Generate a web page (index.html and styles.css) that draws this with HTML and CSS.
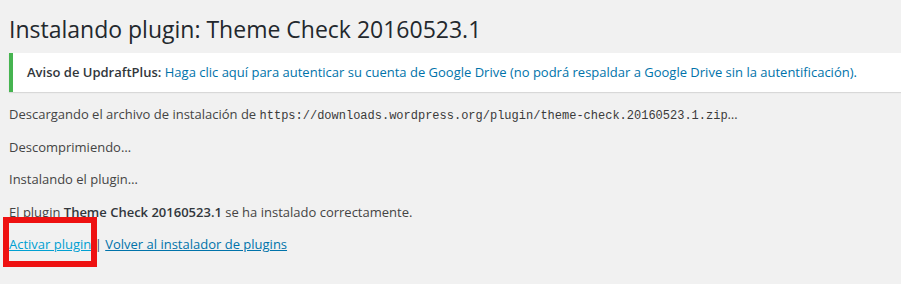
FILE: index.html
```html
<!DOCTYPE html>
<html lang="es">
<head>
    <meta charset="UTF-8">
    <title>Instalar plugin</title>
    <link rel="stylesheet" href="styles.css">
</head>
<body>
    <div class="wrap">
        <h1>Instalando plugin: Theme Check 20160523.1</h1>

        <div class="notice">
            <p><strong>Aviso de UpdraftPlus:</strong> <a href="#">Haga clic aquí para autenticar su cuenta de Google Drive (no podrá respaldar a Google Drive sin la autentificación).</a></p>
        </div>

        <p>Descargando el archivo de instalación de <code>https://downloads.wordpress.org/plugin/theme-check.20160523.1.zip</code>…</p>
        <p>Descomprimiendo…</p>
        <p>Instalando el plugin…</p>
        <p>El plugin <strong>Theme Check 20160523.1</strong> se ha instalado correctamente.</p>
        <p class="actions">
            <span class="marked"><a href="#" class="hover">Activar plugin</a></span> | <a href="#">Volver al instalador de plugins</a>
        </p>
    </div>
</body>
</html>
```

FILE: styles.css
```css
* {
    box-sizing: border-box;
}

body {
    margin: 0;
    background: #f1f1f1;
    color: #444;
    font-family: "Open Sans", sans-serif;
    font-size: 13px;
    line-height: 1.5;
}

.wrap {
    padding: 6px 0 0 9px;
}

h1 {
    margin: 0;
    padding: 9px 15px 4px 0;
    font-size: 23px;
    font-weight: 400;
    line-height: 29px;
    color: #23282d;
}

p {
    margin: 13px 0;
}

a {
    color: #0073aa;
}

.notice {
    margin: 5px 0 13px;
    padding: 1px 12px;
    background: #fff;
    border-left: 4px solid #46b450;
    box-shadow: 0 1px 1px 0 rgba(0, 0, 0, 0.1);
}

.notice p {
    margin: 6.5px 0;
    padding: 2px;
}

.notice a {
    text-decoration: none;
}

code {
    font-family: "Liberation Mono", monospace;
    font-size: 12px;
    color: #3a3a3a;
}

strong {
    font-weight: 600;
    color: #32373c;
}

.marked {
    position: relative;
}

.marked::after {
    content: "";
    position: absolute;
    left: -6px;
    top: -18px;
    width: 94px;
    height: 50px;
    box-sizing: border-box;
    border: 6px solid #ee1111;
}

.hover {
    color: #00a0d2;
}
```
